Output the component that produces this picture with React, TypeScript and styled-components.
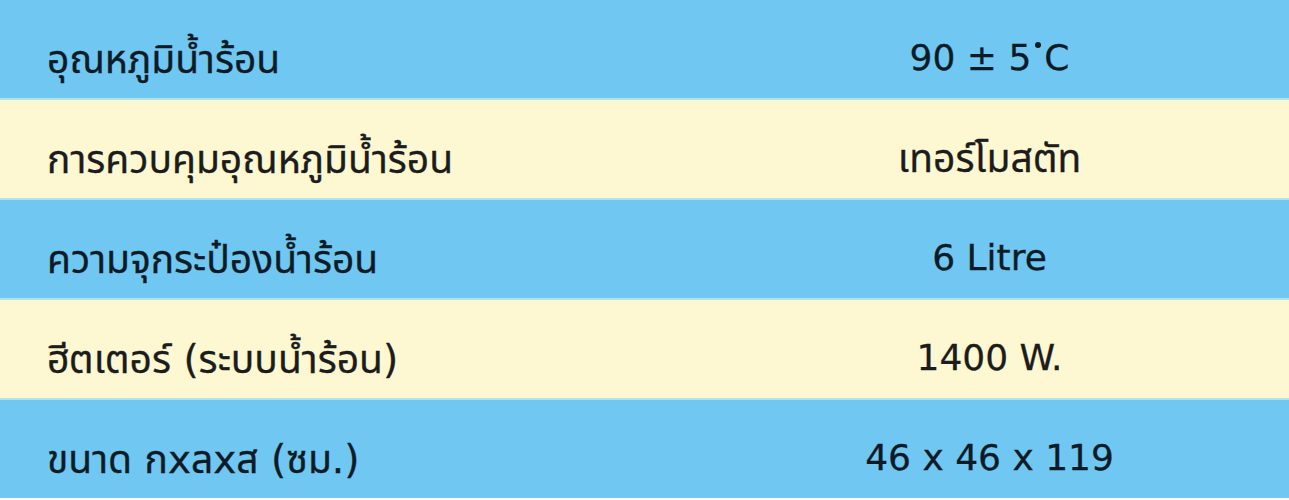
import React from "react";
import styled, { createGlobalStyle } from "styled-components";

interface Spec {
  label: string;
  value: string;
}

const specs: Spec[] = [
  { label: "อุณหภูมิน้ำร้อน", value: "90 ± 5˚C" },
  { label: "การควบคุมอุณหภูมิน้ำร้อน", value: "เทอร์โมสตัท" },
  { label: "ความจุกระป๋องน้ำร้อน", value: "6 Litre" },
  { label: "ฮีตเตอร์ (ระบบน้ำร้อน)", value: "1400 W." },
  { label: "ขนาด กxลxส (ซม.)", value: "46 x 46 x 119" },
];

const GlobalStyle = createGlobalStyle`
  html, body {
    margin: 0;
    padding: 0;
    background: #ffffff;
  }
  body {
    font-family: Tahoma, "DejaVu Sans", "Noto Sans Thai", "Noto Sans", sans-serif;
  }
`;

const Table = styled.div`
  width: 1289px;
  height: 500px;
  display: flex;
  flex-direction: column;
  overflow: hidden;
`;

const Row = styled.div<{ $striped: boolean }>`
  height: 100px;
  box-sizing: border-box;
  display: grid;
  grid-template-columns: 690px 1fr;
  align-items: center;
  padding-top: 20px;
  background-color: ${(p) => (p.$striped ? "#fdf8d1" : "#70c7f1")};
  color: ${(p) => (p.$striped ? "#1c1c1c" : "#0d1b26")};
  border-top: 2px solid #b4e2ea;
  -webkit-text-stroke: 0.3px currentColor;

  &:first-child {
    border-top: none;
    height: 98px;
  }
`;

const Label = styled.div`
  padding-left: 47px;
  font-size: 39px;
  line-height: 1;
  white-space: nowrap;
`;

const Value = styled.div<{ $thai?: boolean }>`
  text-align: center;
  font-size: ${(p) => (p.$thai ? "39px" : "36px")};
  line-height: 1;
  white-space: nowrap;
  padding-bottom: 2px;
`;

const Degree = styled.span`
  display: inline-block;
  width: 6px;
  height: 6px;
  border-radius: 50%;
  background: currentColor;
  vertical-align: 22px;
  margin: 0 3px 0 4px;
`;

const renderValue = (value: string) => {
  if (!value.includes("˚")) return value;
  const [before, after] = value.split("˚");
  return (
    <>
      {before}
      <Degree />
      {after}
    </>
  );
};

const App: React.FC = () => {
  return (
    <>
      <GlobalStyle />
      <Table>
        {specs.map((spec, i) => (
          <Row key={spec.label} $striped={i % 2 === 1}>
            <Label>{spec.label}</Label>
            <Value $thai={/[\u0E00-\u0E7F]/.test(spec.value)}>
              {renderValue(spec.value)}
            </Value>
          </Row>
        ))}
      </Table>
    </>
  );
};

export default App;
